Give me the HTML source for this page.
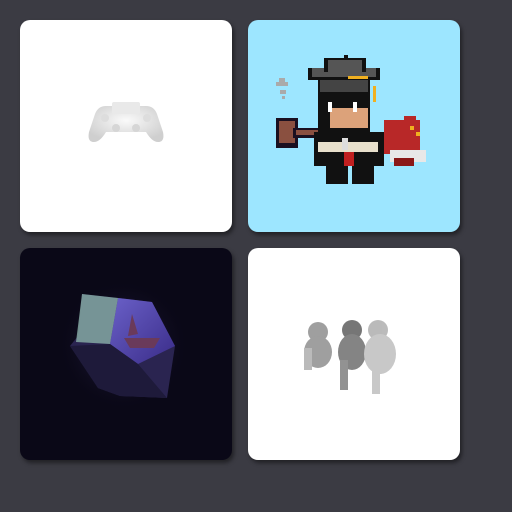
<!DOCTYPE html>
<html><head><style>
html,body{margin:0;padding:0;width:512px;height:512px;background:#3b3b43;overflow:hidden}
.c{position:absolute;width:212px;height:212px;border-radius:10px;box-shadow:2px 3px 4px rgba(0,0,0,.45);overflow:hidden}
</style></head><body>
<div class="c" style="left:20px;top:20px;background:#fff">
<svg width="212" height="212">
<defs><radialGradient id="g1" cx=".5" cy=".4" r=".6"><stop offset="0" stop-color="#fafafa"/><stop offset="1" stop-color="#cfcfcf"/></radialGradient></defs>
<path d="M86 86 L126 86 Q134 86 137 94 L143 112 Q145 122 138 122 Q132 122 126 112 L86 112 Q80 122 74 122 Q67 122 69 112 L75 94 Q78 86 86 86Z" fill="url(#g1)"/>
<rect x="92" y="82" width="28" height="12" rx="2" fill="#e9e9e9"/>
<circle cx="85" cy="98" r="4" fill="#ddd"/><circle cx="127" cy="98" r="4" fill="#ddd"/>
<circle cx="96" cy="108" r="4" fill="#d6d6d6"/><circle cx="116" cy="108" r="4" fill="#d6d6d6"/>
</svg></div>
<div class="c" style="left:248px;top:20px;background:#9de6ff">
<svg width="212" height="212" shape-rendering="crispEdges">
<rect x="28" y="62" width="12" height="4" fill="#aaa"/><rect x="31" y="58" width="6" height="4" fill="#aaa"/><rect x="32" y="70" width="6" height="4" fill="#aaa"/><rect x="34" y="76" width="3" height="3" fill="#aaa"/>
<rect x="28" y="98" width="22" height="30" fill="#1a1020"/><rect x="31" y="101" width="16" height="22" fill="#8a5040"/>
<rect x="45" y="108" width="28" height="10" fill="#1a1020"/><rect x="48" y="110" width="22" height="5" fill="#8a5040"/>
<rect x="60" y="48" width="72" height="12" fill="#111"/><rect x="64" y="48" width="64" height="9" fill="#555"/>
<rect x="76" y="38" width="42" height="14" fill="#111"/><rect x="80" y="40" width="34" height="12" fill="#555"/>
<rect x="96" y="35" width="4" height="4" fill="#111"/>
<rect x="100" y="56" width="20" height="3" fill="#f0b020"/><rect x="125" y="66" width="3" height="16" fill="#f0b020"/>
<rect x="70" y="60" width="52" height="60" fill="#111"/><rect x="72" y="60" width="48" height="12" fill="#444"/>
<rect x="82" y="84" width="38" height="24" fill="#dca27a"/><rect x="82" y="82" width="38" height="6" fill="#111"/>
<rect x="80" y="82" width="4" height="10" fill="#fff"/><rect x="105" y="82" width="4" height="10" fill="#fff"/>
<rect x="66" y="112" width="70" height="34" fill="#111"/><rect x="70" y="122" width="60" height="10" fill="#e8e0cc"/>
<rect x="96" y="132" width="10" height="14" fill="#c02020"/><rect x="94" y="118" width="6" height="12" fill="#ddd"/>
<rect x="78" y="146" width="22" height="18" fill="#111"/><rect x="104" y="146" width="22" height="18" fill="#111"/>
<rect x="136" y="100" width="36" height="34" fill="#b82828"/><rect x="156" y="96" width="12" height="8" fill="#b82828"/>
<rect x="142" y="130" width="36" height="12" fill="#e8e8e8"/><rect x="146" y="138" width="20" height="8" fill="#8a1818"/>
<rect x="162" y="106" width="4" height="4" fill="#f0b020"/><rect x="168" y="112" width="4" height="4" fill="#f0b020"/>
</svg></div>
<div class="c" style="left:20px;top:248px;background:#0a0817">
<svg width="212" height="212">
<defs><radialGradient id="g2" cx=".5" cy=".5" r=".5"><stop offset="0" stop-color="#5a4aa0" stop-opacity=".6"/><stop offset="1" stop-color="#0a0817" stop-opacity="0"/></radialGradient>
<linearGradient id="g3" x1="0" y1="0" x2="1" y2="1"><stop offset="0" stop-color="#6a60c8"/><stop offset="1" stop-color="#3a2c88"/></linearGradient></defs>
<circle cx="103" cy="97" r="65" fill="url(#g2)"/>
<polygon points="62,46 98,50 132,54 155,98 147,150 100,148 78,140 50,98 58,88" fill="#2a2450"/>
<polygon points="98,50 132,54 155,98 118,116 90,96" fill="url(#g3)"/>
<polygon points="62,46 98,50 90,96 56,94" fill="#8ab0a8" opacity=".8"/>
<polygon points="90,96 118,116 147,150 100,148 78,140 50,98" fill="#1e1a3a"/>
<path d="M108 88 L112 66 L118 86 Z M104 90 L140 90 L134 100 L110 100Z" fill="#6a3a5a"/>
</svg></div>
<div class="c" style="left:248px;top:248px;background:#fff">
<svg width="212" height="212">
<g fill="#888" opacity=".8">
<ellipse cx="70" cy="84" rx="10" ry="10"/><ellipse cx="70" cy="104" rx="14" ry="16"/><rect x="56" y="100" width="8" height="22" fill="#aaa"/>
<ellipse cx="104" cy="82" rx="10" ry="10" fill="#555"/><ellipse cx="104" cy="104" rx="14" ry="18" fill="#666"/><rect x="92" y="112" width="8" height="30" fill="#777"/>
<ellipse cx="130" cy="82" rx="10" ry="10" fill="#aaa"/><ellipse cx="132" cy="106" rx="16" ry="20" fill="#bbb"/><rect x="124" y="120" width="8" height="26" fill="#bbb"/>
</g></svg></div>
</body></html>
